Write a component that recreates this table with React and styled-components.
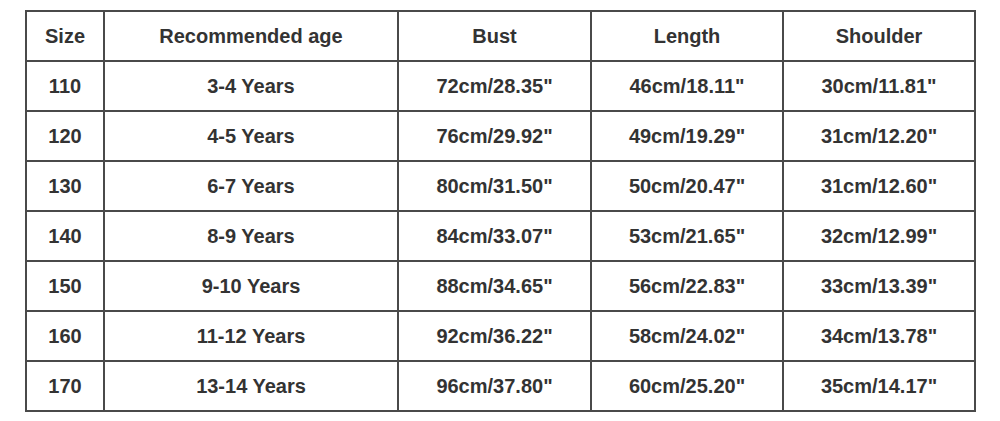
import React from 'react';
import styled, { createGlobalStyle } from "styled-components";

const GlobalStyle = createGlobalStyle`
    html, body {
        margin: 0;
        padding: 0;
        background: #ffffff;
    }
`

const Page = styled.div`
    width: 1000px;
    height: 421px;
    padding: 10px 0 0 25px;
    box-sizing: border-box;
    background: #ffffff;
`

const SizeTable = styled.table`
    border-collapse: collapse;
    width: 949px;
    table-layout: fixed;
    font-family: "Liberation Sans", Arial, sans-serif;
    font-weight: bold;
    font-size: 20px;
    color: #333333;
`

const Cell = styled.td`
    height: 48px;
    padding: 0;
    border: 2px solid #4a4a4a;
    text-align: center;
    vertical-align: middle;
`

const HeadCell = styled(Cell).attrs({ as: "th" })`
    font-weight: bold;
`

const columns = [
    { title: "Size", width: 78 },
    { title: "Recommended age", width: 294 },
    { title: "Bust", width: 193 },
    { title: "Length", width: 192 },
    { title: "Shoulder", width: 192 },
]

const rows = [
    ["110", "3-4 Years", "72cm/28.35\"", "46cm/18.11\"", "30cm/11.81\""],
    ["120", "4-5 Years", "76cm/29.92\"", "49cm/19.29\"", "31cm/12.20\""],
    ["130", "6-7 Years", "80cm/31.50\"", "50cm/20.47\"", "31cm/12.60\""],
    ["140", "8-9 Years", "84cm/33.07\"", "53cm/21.65\"", "32cm/12.99\""],
    ["150", "9-10 Years", "88cm/34.65\"", "56cm/22.83\"", "33cm/13.39\""],
    ["160", "11-12 Years", "92cm/36.22\"", "58cm/24.02\"", "34cm/13.78\""],
    ["170", "13-14 Years", "96cm/37.80\"", "60cm/25.20\"", "35cm/14.17\""],
]

export default function App() {
    return (
        <Page>
            <GlobalStyle />
            <SizeTable>
                <colgroup>
                    {columns.map((c, index) => (
                        <col key={index} style={{ width: c.width }} />
                    ))}
                </colgroup>
                <thead>
                    <tr>
                        {columns.map((c, index) => (
                            <HeadCell key={index}>{c.title}</HeadCell>
                        ))}
                    </tr>
                </thead>
                <tbody>
                    {rows.map((r, index) => (
                        <tr key={index}>
                            {r.map((v, i) => (
                                <Cell key={i}>{v}</Cell>
                            ))}
                        </tr>
                    ))}
                </tbody>
            </SizeTable>
        </Page>
    )
}
